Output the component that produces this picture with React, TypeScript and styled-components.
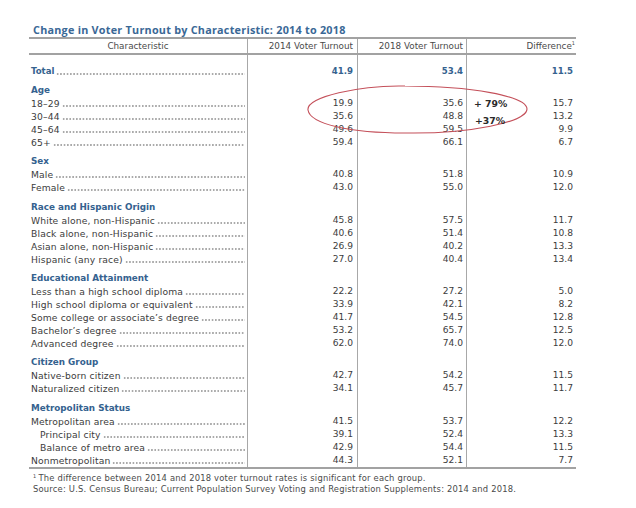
import React from "react";
import styled, { createGlobalStyle } from "styled-components";

const Global = createGlobalStyle`
  html, body { margin: 0; padding: 0; background: #ffffff; }
  body { font-family: "DejaVu Sans", "Liberation Sans", sans-serif; }
`;

const Page = styled.div`
  position: relative;
  width: 636px;
  height: 508px;
  padding-top: 23px;
  box-sizing: border-box;
  background: #ffffff;
`;

const Title = styled.div`
  margin-left: 33px;
  height: 14px;
  line-height: 14px;
  font-family: "Open Sans", "DejaVu Sans", sans-serif;
  font-size: 10.8px;
  letter-spacing: 0.25px;
  font-weight: 700;
  color: #3a6896;
  white-space: nowrap;
`;

const Table = styled.div`
  margin-left: 29px;
  width: 547px;
  color: #3c3c3c;
`;

const Grid = styled.div<{ $pad?: number; $head?: boolean }>`
  display: grid;
  grid-template-columns: 218px 110px 109px 110px;
  ${(p) =>
    p.$head &&
    `border-top: 2px solid #a2a2a2; border-bottom: 2px solid #a2a2a2;`}
`;

const Cell = styled.div<{ $right?: number; $bold?: boolean; $pad?: number }>`
  display: flex;
  align-items: flex-end;
  justify-content: flex-end;
  padding-top: ${(p) => p.$pad ?? 0}px;
  height: 13px;
  line-height: 13px;
  font-size: ${(p) => (p.$bold ? 8.6 : 9.1)}px;
  padding-right: ${(p) => p.$right ?? 4}px;
  border-left: 1.5px solid #a8a8a8;
  font-weight: ${(p) => (p.$bold ? 700 : 400)};
  color: ${(p) => (p.$bold ? "#35628f" : "#3c3c3c")};
  white-space: nowrap;
`;

const Spacer = styled.div`
  border-left: 1.5px solid #a8a8a8;
`;

const HeadCell = styled.div<{ $first?: boolean; $center?: boolean; $right?: number }>`
  height: 14px;
  line-height: 14px;
  font-size: 8.8px;
  color: #4a4a4a;
  text-align: ${(p) => (p.$center ? "center" : "right")};
  padding-right: ${(p) => p.$right ?? 4}px;
  border-left: ${(p) => (p.$first ? "none" : "1.5px solid #a8a8a8")};
  white-space: nowrap;
`;

const Sup = styled.sup`
  font-size: 5px;
  vertical-align: 4px;
  line-height: 0;
`;

const LabelCell = styled.div<{ $indent?: boolean; $pad?: number }>`
  display: flex;
  align-items: flex-end;
  height: 13px;
  padding-top: ${(p) => p.$pad ?? 0}px;
  padding-left: ${(p) => (p.$indent ? 11 : 2)}px;
  padding-right: 2px;
  line-height: 13px;
  color: #3c3c3c;
`;

const LabelText = styled.span<{ $bold?: boolean }>`
  white-space: nowrap;
  font-size: ${(p) => (p.$bold ? 8.6 : 9.2)}px;
  letter-spacing: ${(p) => (p.$bold ? 0 : 0.14)}px;
  font-weight: ${(p) => (p.$bold ? 700 : 400)};
  color: ${(p) => (p.$bold ? "#35628f" : "#3c3c3c")};
`;

const Leader = styled.span`
  flex: 1;
  height: 2px;
  margin: 0 0 3px 2px;
  background-image: radial-gradient(circle, #8a8a8a 0.55px, transparent 0.9px);
  background-size: 3.3px 2px;
  background-repeat: repeat-x;
`;

const GroupTitle = styled.div`
  height: 13px;
  line-height: 13px;
  padding-top: 6.4px;
  padding-left: 2px;
  font-size: 8.8px;
  font-weight: 700;
  color: #35628f;
  white-space: nowrap;
`;

const BottomRule = styled.div`
  width: 547px;
  height: 0;
  border-top: 2px solid #a2a2a2;
`;

const Notes = styled.div`
  margin: 4px 0 0 33px;
  font-size: 8.4px;
  letter-spacing: 0.2px;
  line-height: 11px;
  color: #4a4a4a;
  white-space: nowrap;
`;

const NoteSup = styled.sup`
  font-size: 5px;
  vertical-align: 3px;
  line-height: 0;
  margin-right: 2px;
`;

const Overlay = styled.svg`
  position: absolute;
  left: 0;
  top: 0;
  pointer-events: none;
`;

const Note = styled.div<{ $x: number; $y: number }>`
  position: absolute;
  left: ${(p) => p.$x}px;
  top: ${(p) => p.$y}px;
  font-size: 9.3px;
  line-height: 12px;
  font-weight: 700;
  color: #2a2a2a;
  white-space: nowrap;
`;

type Row = { label: string; v: [string, string, string]; indent?: boolean };
type Group = { title: string; rows: Row[] };

const groups: Group[] = [
  {
    title: "Age",
    rows: [
      { label: "18–29", v: ["19.9", "35.6", "15.7"] },
      { label: "30–44", v: ["35.6", "48.8", "13.2"] },
      { label: "45–64", v: ["49.6", "59.5", "9.9"] },
      { label: "65+", v: ["59.4", "66.1", "6.7"] },
    ],
  },
  {
    title: "Sex",
    rows: [
      { label: "Male", v: ["40.8", "51.8", "10.9"] },
      { label: "Female", v: ["43.0", "55.0", "12.0"] },
    ],
  },
  {
    title: "Race and Hispanic Origin",
    rows: [
      { label: "White alone, non-Hispanic", v: ["45.8", "57.5", "11.7"] },
      { label: "Black alone, non-Hispanic", v: ["40.6", "51.4", "10.8"] },
      { label: "Asian alone, non-Hispanic", v: ["26.9", "40.2", "13.3"] },
      { label: "Hispanic (any race)", v: ["27.0", "40.4", "13.4"] },
    ],
  },
  {
    title: "Educational Attainment",
    rows: [
      { label: "Less than a high school diploma", v: ["22.2", "27.2", "5.0"] },
      { label: "High school diploma or equivalent", v: ["33.9", "42.1", "8.2"] },
      { label: "Some college or associate’s degree", v: ["41.7", "54.5", "12.8"] },
      { label: "Bachelor’s degree", v: ["53.2", "65.7", "12.5"] },
      { label: "Advanced degree", v: ["62.0", "74.0", "12.0"] },
    ],
  },
  {
    title: "Citizen Group",
    rows: [
      { label: "Native-born citizen", v: ["42.7", "54.2", "11.5"] },
      { label: "Naturalized citizen", v: ["34.1", "45.7", "11.7"] },
    ],
  },
  {
    title: "Metropolitan Status",
    rows: [
      { label: "Metropolitan area", v: ["41.5", "53.7", "12.2"] },
      { label: "Principal city", v: ["39.1", "52.4", "13.3"], indent: true },
      { label: "Balance of metro area", v: ["42.9", "54.4", "11.5"], indent: true },
      { label: "Nonmetropolitan", v: ["44.3", "52.1", "7.7"] },
    ],
  },
];

const rights = [4, 3, 3];

function DataRow({ row, bold, pad }: { row: Row; bold?: boolean; pad?: number }) {
  return (
    <Grid>
      <LabelCell $indent={row.indent} $pad={pad}>
        <LabelText $bold={bold}>{row.label}</LabelText>
        <Leader />
      </LabelCell>
      {row.v.map((x, i) => (
        <Cell key={i} $right={rights[i]} $bold={bold} $pad={pad}>
          {x}
        </Cell>
      ))}
    </Grid>
  );
}

export default function App() {
  return (
    <>
      <Global />
      <Page>
        <Title>Change in Voter Turnout by Characteristic: 2014 to 2018</Title>
        <Table>
          <Grid $head>
            <HeadCell $first $center $right={0}>
              Characteristic
            </HeadCell>
            <HeadCell $right={4}>2014 Voter Turnout</HeadCell>
            <HeadCell $right={3}>2018 Voter Turnout</HeadCell>
            <HeadCell $right={1}>
              Difference<Sup>1</Sup>
            </HeadCell>
          </Grid>
          <DataRow row={{ label: "Total", v: ["41.9", "53.4", "11.5"] }} bold pad={9.5} />
          {groups.map((g) => (
            <React.Fragment key={g.title}>
              <Grid>
                <GroupTitle>{g.title}</GroupTitle>
                <Spacer />
                <Spacer />
                <Spacer />
              </Grid>
              {g.rows.map((r) => (
                <DataRow key={r.label} row={r} />
              ))}
            </React.Fragment>
          ))}
          <BottomRule />
        </Table>
        <Notes>
          <div>
            <NoteSup>1</NoteSup>The difference between 2014 and 2018 voter turnout rates is significant for each group.
          </div>
          <div>
            Source: U.S. Census Bureau; Current Population Survey Voting and Registration Supplements: 2014 and 2018.
          </div>
        </Notes>
        <Overlay width="636" height="508" viewBox="0 0 636 508">
          <path
            d="M 308 110 C 306 97, 360 85, 405 86 C 470 86, 527 96, 527 109 C 527 122, 470 134, 405 133 C 350 133, 310 124, 308 110 Z"
            fill="none"
            stroke="#c4505a"
            strokeWidth="1.1"
          />
        </Overlay>
        <Note $x={474} $y={98}>+ 79%</Note>
        <Note $x={475} $y={115}>+37%</Note>
      </Page>
    </>
  );
}
